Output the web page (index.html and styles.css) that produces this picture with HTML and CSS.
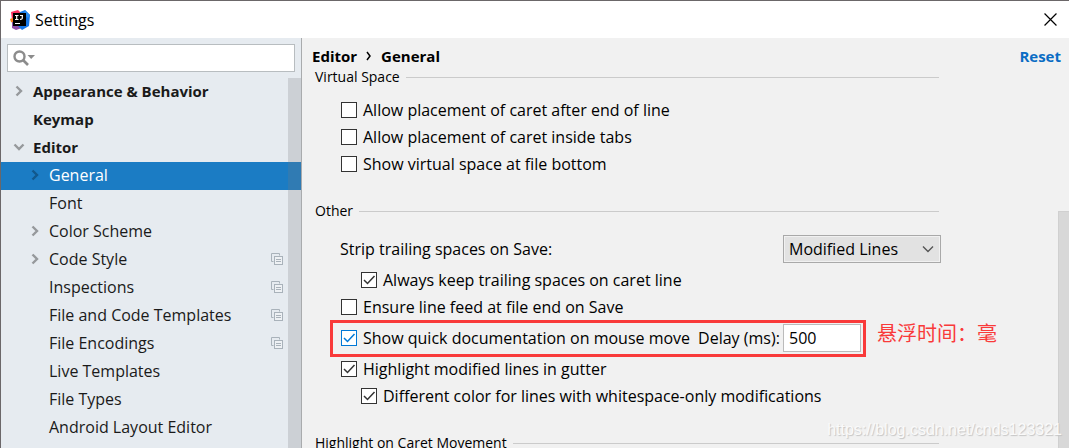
FILE: index.html
```html
<!DOCTYPE html>
<html lang="en">
<head>
    <meta charset="UTF-8">
    <meta name="viewport" content="width=device-width, initial-scale=1.0">
    <title>Settings</title>
    <link rel="stylesheet" href="styles.css">
</head>
<body>
    <!-- Shared icons -->
    <svg class="icon-defs" aria-hidden="true">
        <symbol id="chevron-right" viewBox="0 0 12 12">
            <path d="M3.5 1.5 L8 6 L3.5 10.5" fill="none" stroke="currentColor" stroke-width="2.4"/>
        </symbol>
        <symbol id="chevron-down" viewBox="0 0 12 12">
            <path d="M1.5 3.5 L6 8 L10.5 3.5" fill="none" stroke="currentColor" stroke-width="2.4"/>
        </symbol>
        <symbol id="project-copy" viewBox="0 0 12 12">
            <path d="M2.5 8.5 H0.5 V0.5 H8.5 V2.5" fill="none" stroke="#a9b2ba"/>
            <rect x="3.5" y="3.5" width="8" height="8" fill="#eef1f4" stroke="#a9b2ba"/>
            <path d="M5 6.5 H10 M5 8.5 H10" stroke="#a9b2ba"/>
        </symbol>
    </svg>

    <div class="window">
        <header class="title-bar">
            <svg class="app-icon" viewBox="0 0 20 20" aria-hidden="true">
                <path d="M1 2 L8 0 L12 4 L7 12 L2 10 Z" fill="#fc3160"/>
                <path d="M0 9 L5 7 L5 14 L1 12 Z" fill="#fc801d"/>
                <path d="M2 12 L9 12 L12 18 L6 20 L2 18 Z" fill="#8f4fa8"/>
                <path d="M10 2 L15 0 L20 5 L19 16 L12 20 L8 16 Z" fill="#1677e8"/>
                <path d="M15 0 L20 5 L18 8 L13 4 Z" fill="#2a8cf0"/>
                <rect x="3" y="3" width="13" height="13" fill="#000"/>
                <path d="M5 5.5 H8.5 M6.7 5.5 V9.5 M5 9.5 H8.5 M10 5.5 H13 M12.3 5.5 V8 Q12.3 9.5 10 9.3 M5 13.5 H10" fill="none" stroke="#fff" stroke-width="1.2"/>
            </svg>
            <h1 class="title">Settings</h1>
            <button class="close" type="button" aria-label="Close">
                <svg viewBox="0 0 12 12"><path d="M0.5 0.5 L11.5 11.5 M11.5 0.5 L0.5 11.5" stroke="#000" stroke-width="1.1"/></svg>
            </button>
        </header>

        <div class="body">
            <nav class="sidebar">
                <div class="search">
                    <svg class="search-icon" viewBox="0 0 22 16" aria-hidden="true">
                        <circle cx="6.5" cy="6.5" r="5" fill="none" stroke="#8c8c8c" stroke-width="2.4"/>
                        <path d="M10 10 L15 15" stroke="#8c8c8c" stroke-width="2.6"/>
                        <path d="M14.5 5 H22 L18.2 9 Z" fill="#8c8c8c"/>
                    </svg>
                    <input class="search-input" type="text" aria-label="Search settings">
                </div>
                <div class="tree-wrap">
                    <ul class="tree">
                        <li class="node top"><svg class="arrow"><use href="#chevron-right"/></svg><span>Appearance &amp; Behavior</span></li>
                        <li class="node top"><span class="arrow"></span><span>Keymap</span></li>
                        <li class="node top"><svg class="arrow"><use href="#chevron-down"/></svg><span>Editor</span></li>
                        <li class="node selected"><svg class="arrow"><use href="#chevron-right"/></svg><span>General</span></li>
                        <li class="node"><span class="arrow"></span><span>Font</span></li>
                        <li class="node"><svg class="arrow"><use href="#chevron-right"/></svg><span>Color Scheme</span></li>
                        <li class="node"><svg class="arrow"><use href="#chevron-right"/></svg><span>Code Style</span><svg class="copy"><use href="#project-copy"/></svg></li>
                        <li class="node"><span class="arrow"></span><span>Inspections</span><svg class="copy"><use href="#project-copy"/></svg></li>
                        <li class="node"><span class="arrow"></span><span>File and Code Templates</span><svg class="copy"><use href="#project-copy"/></svg></li>
                        <li class="node"><span class="arrow"></span><span>File Encodings</span><svg class="copy"><use href="#project-copy"/></svg></li>
                        <li class="node"><span class="arrow"></span><span>Live Templates</span></li>
                        <li class="node"><span class="arrow"></span><span>File Types</span></li>
                        <li class="node"><span class="arrow"></span><span>Android Layout Editor</span></li>
                    </ul>
                    <div class="tree-scrollbar"></div>
                </div>
            </nav>

            <main class="main">
                <div class="page-header">
                    <span>Editor</span>
                    <svg class="crumb-arrow" viewBox="0 0 6 10" aria-hidden="true"><path d="M1 1 L4 5 L1 9" fill="none" stroke="#000" stroke-width="1.5"/></svg>
                    <span>General</span>
                    <a class="reset" href="#">Reset</a>
                </div>

                <div class="content">
                    <h2 class="section-title">Virtual Space</h2>
                    <div class="group">
                        <label class="row"><input type="checkbox">Allow placement of caret after end of line</label>
                        <label class="row"><input type="checkbox">Allow placement of caret inside tabs</label>
                        <label class="row"><input type="checkbox">Show virtual space at file bottom</label>
                    </div>

                    <h2 class="section-title">Other</h2>
                    <div class="group other">
                        <div class="strip-row">
                            <label for="strip">Strip trailing spaces on Save:</label>
                            <div class="select-wrap">
                                <select id="strip">
                                    <option>Modified Lines</option>
                                    <option>All</option>
                                    <option>None</option>
                                </select>
                                <svg class="select-arrow" viewBox="0 0 12 8" aria-hidden="true"><path d="M1 1.5 L6 6.5 L11 1.5" fill="none" stroke="#555" stroke-width="1.4"/></svg>
                            </div>
                        </div>
                        <label class="row indent"><input type="checkbox" checked>Always keep trailing spaces on caret line</label>
                        <label class="row"><input type="checkbox">Ensure line feed at file end on Save</label>
                        <div class="quick-doc">
                            <div class="marked">
                                <label class="row"><input class="active" type="checkbox" checked>Show quick documentation on mouse move</label>
                                <label class="delay-label" for="delay">Delay (ms):</label>
                                <input class="delay" id="delay" type="text" value="500">
                            </div>
                            <span class="note" lang="zh">悬浮时间：毫</span>
                        </div>
                        <label class="row"><input type="checkbox" checked>Highlight modified lines in gutter</label>
                        <label class="row indent"><input type="checkbox" checked>Different color for lines with whitespace-only modifications</label>
                    </div>

                    <h2 class="section-title">Highlight on Caret Movement</h2>
                </div>
                <div class="page-scrollbar"></div>
            </main>
        </div>
        <div class="watermark">https://blog.csdn.net/cnds123321</div>
    </div>
</body>
</html>
```

FILE: styles.css
```css
* {
    box-sizing: border-box;
}

body {
    margin: 0;
    font-family: "Open Sans", "Noto Sans CJK SC", sans-serif;
    font-size: 16px;
    line-height: 22px;
    color: #000;
    background: #f1f1f1;
}

.icon-defs {
    display: none;
}

.window {
    position: relative;
    display: flex;
    flex-direction: column;
    height: 100vh;
    overflow: hidden;
    border-top: 1px solid #6b6769;
    border-left: 1px solid #6b6769;
}

/* Title bar */
.title-bar {
    display: flex;
    flex: none;
    align-items: center;
    height: 37px;
    padding: 0 12px 0 9px;
    background: #fff;
}

.app-icon {
    width: 20px;
    height: 20px;
}

.title {
    margin: 0 auto 0 5px;
    font-size: 16px;
    font-weight: normal;
}

.close {
    display: flex;
    padding: 0;
    border: none;
    background: none;
}

.close svg {
    width: 13px;
    height: 13px;
}

.body {
    display: flex;
    flex: 1;
    min-height: 0;
}

/* Sidebar */
.sidebar {
    display: flex;
    flex: none;
    flex-direction: column;
    width: 301px;
    padding-top: 6px;
    background: #e6ebf0;
    border-right: 1px solid #a9abad;
}

.search {
    display: flex;
    align-items: center;
    height: 28px;
    margin: 0 6px 6px;
    padding-left: 5px;
    background: #fff;
    border: 1px solid #b8bdc0;
}

.search-icon {
    width: 22px;
    height: 16px;
}

.search-input {
    flex: 1;
    min-width: 0;
    padding: 0 6px;
    font: inherit;
    border: none;
    outline: none;
    background: none;
}

.tree-wrap {
    position: relative;
    flex: 1;
    min-height: 0;
    overflow: hidden;
}

.tree {
    margin: 0;
    padding: 0;
    list-style: none;
}

.node {
    display: flex;
    align-items: center;
    height: 28px;
    padding: 0 18px 2px 28px;
    color: #1a1a1a;
}

.node.top {
    padding-left: 12px;
    font-size: 15px;
    font-weight: bold;
}

.node.selected {
    color: #fff;
    background: #1b7cc4;
}

.arrow {
    flex: none;
    width: 12px;
    height: 12px;
    margin-right: 8px;
    color: #96999c;
}

.selected .arrow {
    color: #12588c;
}

.copy {
    width: 12px;
    height: 12px;
    margin-left: auto;
}

.tree-scrollbar {
    position: absolute;
    top: 0;
    right: 0;
    bottom: 0;
    width: 13px;
    background: rgba(120, 120, 125, 0.23);
}

/* Settings page */
.main {
    position: relative;
    display: flex;
    flex: 1;
    flex-direction: column;
    min-width: 0;
    background: #f1f1f1;
}

.page-header {
    display: flex;
    flex: none;
    align-items: center;
    height: 28px;
    padding: 8px 8px 0 10px;
    font-size: 15px;
    font-weight: bold;
}

.crumb-arrow {
    width: 6px;
    height: 10px;
    margin: 0 9px;
}

.reset {
    margin-left: auto;
    color: #0a6cc4;
    text-decoration: none;
}

.content {
    flex: 1;
    min-height: 0;
    padding: 0 128px 0 13px;
    overflow: hidden;
}

.section-title {
    display: flex;
    align-items: center;
    gap: 6px;
    margin: 0 2px 0 0;
    font-size: 14px;
    font-weight: normal;
    white-space: nowrap;
}

.section-title::after {
    content: '';
    flex: 1;
    height: 1px;
    background: #cbcbcb;
}

.group {
    padding: 8px 0 23px;
}

.group.other {
    padding-top: 13px;
}

.row {
    display: flex;
    align-items: center;
    height: 27px;
    padding-left: 26px;
    white-space: nowrap;
}

.row.indent {
    padding-left: 46px;
}

input[type="checkbox"] {
    appearance: none;
    flex: none;
    width: 16px;
    height: 16px;
    margin: 0 6px 0 0;
    border: 1px solid #333;
    background: #fff center / 14px 14px no-repeat;
}

input[type="checkbox"]:checked {
    background-image: url("data:image/svg+xml,%3Csvg xmlns='http://www.w3.org/2000/svg' viewBox='0 0 14 14'%3E%3Cpath d='M2 7 L5.5 10.5 L12.5 3' fill='none' stroke='%23333' stroke-width='1.5'/%3E%3C/svg%3E");
}

input[type="checkbox"].active {
    border-color: #0078d7;
    background-image: url("data:image/svg+xml,%3Csvg xmlns='http://www.w3.org/2000/svg' viewBox='0 0 14 14'%3E%3Cpath d='M2 7 L5.5 10.5 L12.5 3' fill='none' stroke='%230078d7' stroke-width='1.5'/%3E%3C/svg%3E");
}

.strip-row {
    display: flex;
    align-items: center;
    justify-content: space-between;
    margin-bottom: 3px;
    padding-left: 25px;
}

.select-wrap {
    position: relative;
    width: 158px;
    height: 28px;
}

select {
    appearance: none;
    width: 100%;
    height: 100%;
    padding: 0 24px 0 5px;
    font: inherit;
    color: #000;
    background: #e2e2e2;
    border: 1px solid #a9a9a9;
    border-radius: 0;
    box-shadow: inset 0 0 0 1px #f1f1f1;
}

.select-arrow {
    position: absolute;
    top: 10px;
    right: 7px;
    width: 12px;
    height: 8px;
    pointer-events: none;
}

/* Highlighted option with its note */
.quick-doc {
    display: flex;
    margin: 0 0 -2px 15px;
    white-space: nowrap;
}

.marked {
    display: flex;
    flex: none;
    align-items: center;
    width: 536px;
    height: 37px;
    padding: 0 2px 2px 8px;
    border: 3px solid #f93a3a;
}

.marked .row {
    padding-left: 0;
}

.delay-label {
    margin-left: 8px;
}

.delay {
    width: 78px;
    height: 28px;
    margin-left: auto;
    padding: 0 5px;
    font: inherit;
    color: #000;
    background: #fff;
    border: 1px solid #bbb;
    border-radius: 0;
}

.note {
    margin-left: 11px;
    font-family: "Noto Sans CJK SC", sans-serif;
    font-size: 20px;
    line-height: 26px;
    color: #f93a3a;
}

.page-scrollbar {
    position: absolute;
    top: 173px;
    right: 0;
    bottom: 0;
    width: 11px;
    background: #d8d8d8;
    border: 1px solid #d0d0d0;
    border-width: 1px 0 0 1px;
}

.watermark {
    position: absolute;
    right: 7px;
    bottom: 7px;
    font-family: "Liberation Sans", Arial, sans-serif;
    font-size: 16px;
    color: #fafafa;
    text-shadow: 1px 1px 1px #c4c4c4;
}
```
